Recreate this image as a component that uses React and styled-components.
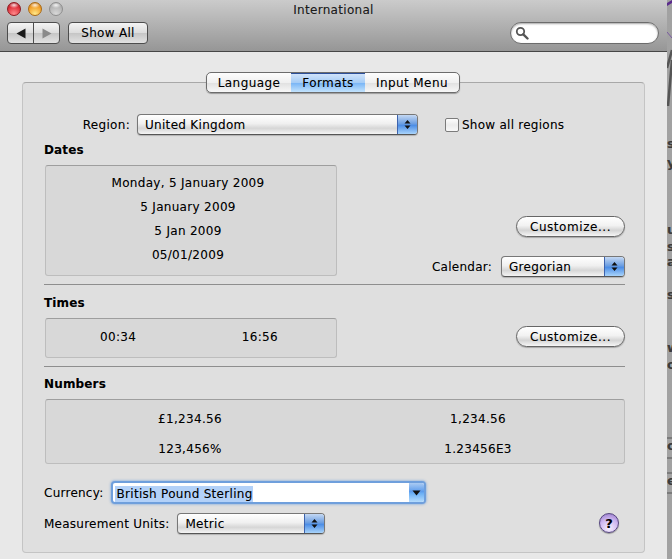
import React from "react";
import styled, { createGlobalStyle } from "styled-components";

const GlobalStyle = createGlobalStyle`
  html, body {
    margin: 0;
    padding: 0;
    background: #9a9a9a;
  }
  * {
    box-sizing: border-box;
  }
`;

const Desktop = styled.div`
  position: relative;
  display: flex;
  width: 672px;
  height: 559px;
  overflow: hidden;
  background: linear-gradient(90deg, #7f7f7f, #a2a2a2);
  font-family: "DejaVu Sans", sans-serif;
  font-size: 12px;
  color: #000;
  text-shadow: 0 0 0.5px rgba(0, 0, 0, 0.25);
`;

const Wallpaper = styled.svg`
  flex: none;
  width: 5px;
  height: 559px;
`;

const DesktopLetter = styled.span`
  position: absolute;
  left: 667px;
  top: ${(p) => p.$top}px;
  font-size: 13px;
  font-weight: bold;
  line-height: 12px;
  color: #3c3c3c;
`;

const Window = styled.div`
  flex: none;
  width: 667px;
  height: 559px;
  display: flex;
  flex-direction: column;
  background: #e8e8e8;
`;

const TitleBar = styled.div`
  flex: none;
  height: 52px;
  padding: 2px 8px 0 7px;
  display: flex;
  flex-direction: column;
  background: linear-gradient(#cbcbcb, #969696);
  border-bottom: 1px solid #474747;
`;

const TitleRow = styled.div`
  position: relative;
  height: 14px;
  display: flex;
  align-items: center;
  gap: 7px;
`;

const Light = styled.span`
  width: 14px;
  height: 14px;
  border-radius: 50%;
  border: 1px solid ${(p) => p.$edge};
  background:
    radial-gradient(ellipse 5px 3px at 50% 18%, rgba(255, 255, 255, 0.85) 0, rgba(255, 255, 255, 0) 100%),
    radial-gradient(circle at 50% 90%, ${(p) => p.$glow} 0, ${(p) => p.$base} 60%, ${(p) => p.$dark} 100%);
`;

const Title = styled.span`
  position: absolute;
  left: 0;
  right: -1px;
  top: 1px;
  text-align: center;
  font-size: 12px;
  letter-spacing: 0.3px;
  color: #1c1c1c;
`;

const ToolRow = styled.div`
  margin-top: 6px;
  height: 22px;
  display: flex;
  align-items: center;
`;

const ToolGroup = styled.div`
  width: 53px;
  height: 22px;
  display: flex;
  border: 1px solid #4d4d4d;
  border-radius: 4px;
  background: linear-gradient(#f4f4f4, #dcdcdc 50%, #c6c6c6 52%, #e2e2e2);
`;

const ToolSegment = styled.div`
  flex: 1;
  display: flex;
  align-items: center;
  justify-content: center;
  border-left: ${(p) => (p.$divided ? "1px solid #4d4d4d" : "none")};
`;

const ToolButton = styled.div`
  margin-left: 8px;
  width: 80px;
  height: 22px;
  display: flex;
  align-items: center;
  justify-content: center;
  border: 1px solid #4d4d4d;
  border-radius: 4px;
  background: linear-gradient(#f4f4f4, #dcdcdc 50%, #c6c6c6 52%, #e2e2e2);
  font-size: 12px;
  letter-spacing: 0.3px;
`;

const Search = styled.div`
  margin-left: auto;
  width: 149px;
  height: 22px;
  padding-left: 4px;
  display: flex;
  align-items: center;
  background: #fff;
  border: 1px solid #6c6c6c;
  border-radius: 11px;
  box-shadow: inset 0 1px 2px rgba(0, 0, 0, 0.35);
`;

const Body = styled.div`
  flex: 1;
  padding: 30px 22px 6px;
`;

const Panel = styled.div`
  height: 471px;
  width: 623px;
  padding: 0 19px 0 21px;
  background: #dfdfdf;
  border: 1px solid #c4c4c4;
  border-top-color: #a8a8a8;
  border-radius: 4px;
`;

const Tabs = styled.div`
  width: 254px;
  height: 21px;
  margin: -11px 0 0 162px;
  display: flex;
  border: 1px solid #6c6c6c;
  border-radius: 5px;
  overflow: hidden;
  box-shadow: 0 1px 1px rgba(0, 0, 0, 0.3);
  background: linear-gradient(#fdfdfd, #f0f0f0 50%, #e2e2e2 55%, #f7f7f7);
`;

const Tab = styled.div`
  width: ${(p) => p.$width}px;
  flex: none;
  display: flex;
  align-items: center;
  justify-content: center;
  font-size: 12px;
  letter-spacing: 0.4px;
  background: ${(p) => (p.$active ? "linear-gradient(#d6e6fa, #a5ccf6 50%, #7cb7f6 55%, #c3e3fd)" : "none")};
  box-shadow: ${(p) => (p.$active ? "inset 0 1px 0 #2c4f99" : "none")};
`;

const RegionRow = styled.div`
  margin-top: 21px;
  height: 21px;
  display: flex;
  align-items: center;
`;

const RegionLabel = styled.span`
  width: 86px;
  margin-right: 7px;
  text-align: right;
  letter-spacing: 0.3px;
`;

const Label = styled.span`
  letter-spacing: 0.25px;
  white-space: nowrap;
`;

const Select = styled.div`
  flex: none;
  width: ${(p) => p.$width}px;
  height: 21px;
  display: flex;
  align-items: center;
  border: 1px solid #777;
  border-bottom-color: #555;
  border-radius: 4px;
  overflow: hidden;
  background: linear-gradient(#fff, #f0f0f0 45%, #d6d6d6 70%, #f4f4f4);
  box-shadow: 0 1px 1px rgba(0, 0, 0, 0.2);
`;

const SelectText = styled.span`
  flex: 1;
  padding-left: 7px;
  letter-spacing: 0.3px;
`;

const Stepper = styled.span`
  flex: none;
  width: 20px;
  height: 100%;
  display: flex;
  align-items: center;
  justify-content: center;
  background: linear-gradient(#c4d8f3, #6d9fe2 45%, #4d8ee6 55%, #a9d4fb);
  border-left: 1px solid #3d63ad;
`;

const Checkbox = styled.span`
  flex: none;
  margin-left: 27px;
  margin-right: 3px;
  width: 14px;
  height: 14px;
  border: 1px solid #7b7b7b;
  border-radius: 2px;
  background: linear-gradient(#fdfdfd, #ececec 50%, #f8f8f8);
`;

const Heading = styled.h3`
  margin: ${(p) => p.$top}px 0 0;
  height: 14px;
  font-size: 12px;
  font-weight: bold;
  line-height: 16px;
  letter-spacing: 0.15px;
`;

const SectionRow = styled.div`
  margin-top: 9px;
  display: flex;
  align-items: flex-start;
  justify-content: space-between;
`;

const Well = styled.div`
  width: ${(p) => p.$width}px;
  height: ${(p) => p.$height}px;
  margin-left: 1px;
  background: #d8d8d8;
  border: 1px solid #bdbdbd;
  border-top-color: #9e9e9e;
  border-radius: 3px;
`;

const DateList = styled(Well)`
  display: flex;
  flex-direction: column;
  padding: 5px 6px 0 0;
`;

const DateLine = styled.div`
  height: 24px;
  display: flex;
  align-items: center;
  justify-content: center;
  letter-spacing: 0.3px;
`;

const TimeWell = styled(Well)`
  display: flex;
  align-items: center;
  padding: 0 58px 2px 54px;
  justify-content: space-between;
  letter-spacing: 0.35px;
`;

const SideColumn = styled.div`
  display: flex;
  flex-direction: column;
  align-items: flex-end;
  padding-top: ${(p) => p.$top}px;
`;

const PillButton = styled.div`
  width: 109px;
  height: 21px;
  display: flex;
  align-items: center;
  justify-content: center;
  border: 1px solid #666;
  border-radius: 11px;
  background: linear-gradient(#fff, #f2f2f2 45%, #d4d4d4 70%, #f6f6f6);
  box-shadow: 0 1px 1px rgba(0, 0, 0, 0.25);
  letter-spacing: 0.55px;
`;

const CalendarRow = styled.div`
  margin-top: 19px;
  display: flex;
  align-items: center;
  gap: 9px;
`;

const Divider = styled.hr`
  margin: ${(p) => p.$top}px 0 0;
  height: 1px;
  border: 0;
  background: #8e8e8e;
`;

const NumberWell = styled(Well)`
  margin-top: 9px;
  display: grid;
  grid-template-columns: 289px 1fr;
  grid-auto-rows: 30px;
  padding-top: 4px;
  letter-spacing: 0.3px;
`;

const NumberCell = styled.div`
  display: flex;
  align-items: center;
  justify-content: center;
  padding-right: ${(p) => (p.$left ? 1 : 3)}px;
`;

const CurrencyRow = styled.div`
  margin-top: 19px;
  height: 19px;
  display: flex;
  align-items: center;
  gap: 10px;
`;

const Combo = styled.div`
  width: 311px;
  height: 19px;
  display: flex;
  align-items: stretch;
  background: #fff;
  border-radius: 2px;
  box-shadow: 0 0 0 2px #6f9fdc, 0 0 2px 3px rgba(111, 159, 220, 0.5);
`;

const ComboText = styled.span`
  flex: 1;
  padding-left: 2px;
  display: flex;
  align-items: flex-end;
  letter-spacing: 0.3px;
`;

const Selected = styled.span`
  height: 16px;
  padding-left: 1px;
  line-height: 17px;
  background: #b3d1f8;
`;

const ComboArrow = styled.span`
  flex: none;
  width: 15px;
  display: flex;
  align-items: center;
  justify-content: center;
  border-radius: 0 2px 2px 0;
  background: linear-gradient(#aacbf3, #5d9cec 45%, #6cb0f5 55%, #b5dcfd);
`;

const UnitsRow = styled.div`
  margin-top: 11px;
  height: 21px;
  display: flex;
  align-items: center;
  gap: 8px;
`;

const Help = styled.span`
  margin: -1px 6px 0 auto;
  width: 20px;
  height: 20px;
  display: flex;
  align-items: center;
  justify-content: center;
  border: 1px solid #55467f;
  border-radius: 50%;
  background: radial-gradient(circle at 50% 80%, #f7f0ff 0, #cdb6ef 55%, #8e70c6 100%);
  box-shadow: 0 1px 1px rgba(0, 0, 0, 0.35);
  font-size: 13px;
  font-weight: bold;
`;

const Arrows = () => (
  <svg width="7" height="13" viewBox="0 0 7 13">
    <path d="M3.5 2 L6.5 5.5 H0.5 Z M3.5 11 L0.5 7.5 H6.5 Z" fill="#111" />
  </svg>
);

const App = () => (
  <Desktop>
    <GlobalStyle />
    <Window>
      <TitleBar>
        <TitleRow>
          <Light $edge="#8d1a1f" $base="#e0323c" $glow="#ff8a8c" $dark="#9c1620" />
          <Light $edge="#a96a14" $base="#f3a12a" $glow="#ffe98a" $dark="#bb6d16" />
          <Light $edge="#8e8e8e" $base="#b6b6b6" $glow="#d8d8d8" $dark="#a0a0a0" />
          <Title>International</Title>
        </TitleRow>
        <ToolRow>
          <ToolGroup>
            <ToolSegment>
              <svg width="10" height="11" viewBox="0 0 10 11">
                <path d="M0.5 5.5 L9.5 0.5 V10.5 Z" fill="#1a1a1a" />
              </svg>
            </ToolSegment>
            <ToolSegment $divided>
              <svg width="10" height="11" viewBox="0 0 10 11">
                <path d="M9.5 5.5 L0.5 0.5 V10.5 Z" fill="#8a8a8a" />
              </svg>
            </ToolSegment>
          </ToolGroup>
          <ToolButton>Show All</ToolButton>
          <Search>
            <svg width="14" height="14" viewBox="0 0 14 14">
              <circle cx="5.5" cy="5.5" r="3.7" fill="none" stroke="#555" strokeWidth="1.8" />
              <path d="M8.3 8.3 L12.5 12.5" stroke="#555" strokeWidth="2.4" strokeLinecap="round" />
            </svg>
          </Search>
        </ToolRow>
      </TitleBar>
      <Body>
        <Panel>
          <Tabs>
            <Tab $width={84}>Language</Tab>
            <Tab $width={74} $active>Formats</Tab>
            <Tab $width={94}>Input Menu</Tab>
          </Tabs>
          <RegionRow>
            <RegionLabel>Region:</RegionLabel>
            <Select $width={281}>
              <SelectText>United Kingdom</SelectText>
              <Stepper><Arrows /></Stepper>
            </Select>
            <Checkbox />
            <Label>Show all regions</Label>
          </RegionRow>

          <Heading $top={7}>Dates</Heading>
          <SectionRow>
            <DateList $width={292} $height={111}>
              <DateLine>Monday, 5 January 2009</DateLine>
              <DateLine>5 January 2009</DateLine>
              <DateLine>5 Jan 2009</DateLine>
              <DateLine>05/01/2009</DateLine>
            </DateList>
            <SideColumn $top={51}>
              <PillButton>Customize...</PillButton>
              <CalendarRow>
                <Label>Calendar:</Label>
                <Select $width={124}>
                  <SelectText>Gregorian</SelectText>
                  <Stepper><Arrows /></Stepper>
                </Select>
              </CalendarRow>
            </SideColumn>
          </SectionRow>
          <Divider $top={7} />

          <Heading $top={10}>Times</Heading>
          <SectionRow>
            <TimeWell $width={292} $height={40}>
              <span>00:34</span>
              <span>16:56</span>
            </TimeWell>
            <SideColumn $top={8}>
              <PillButton>Customize...</PillButton>
            </SideColumn>
          </SectionRow>
          <Divider $top={8} />

          <Heading $top={9}>Numbers</Heading>
          <NumberWell $width={580} $height={65}>
            <NumberCell $left>£1,234.56</NumberCell>
            <NumberCell>1,234.56</NumberCell>
            <NumberCell $left>123,456%</NumberCell>
            <NumberCell>1.23456E3</NumberCell>
          </NumberWell>

          <CurrencyRow>
            <Label>Currency:</Label>
            <Combo>
              <ComboText><Selected>British Pound Sterling</Selected></ComboText>
              <ComboArrow>
                <svg width="9" height="6" viewBox="0 0 9 6">
                  <path d="M0.5 0.5 H8.5 L4.5 5.5 Z" fill="#111" />
                </svg>
              </ComboArrow>
            </Combo>
          </CurrencyRow>
          <UnitsRow>
            <Label>Measurement Units:</Label>
            <Select $width={148}>
              <SelectText>Metric</SelectText>
              <Stepper><Arrows /></Stepper>
            </Select>
            <Help>?</Help>
          </UnitsRow>
        </Panel>
      </Body>
    </Window>
    <Wallpaper viewBox="0 0 5 559">
      <path d="M0 3 L5 0 V3 L0 6 Z" fill="#5a2a8c" />
      <path d="M0 32 L5 38" stroke="#7a5aa0" strokeWidth="1" />
      <path d="M0 68 L5 50 M1 106 L5 60" stroke="#555" strokeWidth="2.5" fill="none" />
      <path d="M0 438 H5 M0 458 H5 M0 473 H5 M0 493 H5" stroke="#555" strokeWidth="1" />
    </Wallpaper>
    <DesktopLetter $top={138}>s</DesktopLetter>
    <DesktopLetter $top={157}>y</DesktopLetter>
    <DesktopLetter $top={224}>u</DesktopLetter>
    <DesktopLetter $top={241}>s</DesktopLetter>
    <DesktopLetter $top={256}>a</DesktopLetter>
    <DesktopLetter $top={289}>s</DesktopLetter>
    <DesktopLetter $top={342}>w</DesktopLetter>
    <DesktopLetter $top={359}>o</DesktopLetter>
    <DesktopLetter $top={440}>c</DesktopLetter>
    <DesktopLetter $top={475}>e</DesktopLetter>
  </Desktop>
);

export default App;
